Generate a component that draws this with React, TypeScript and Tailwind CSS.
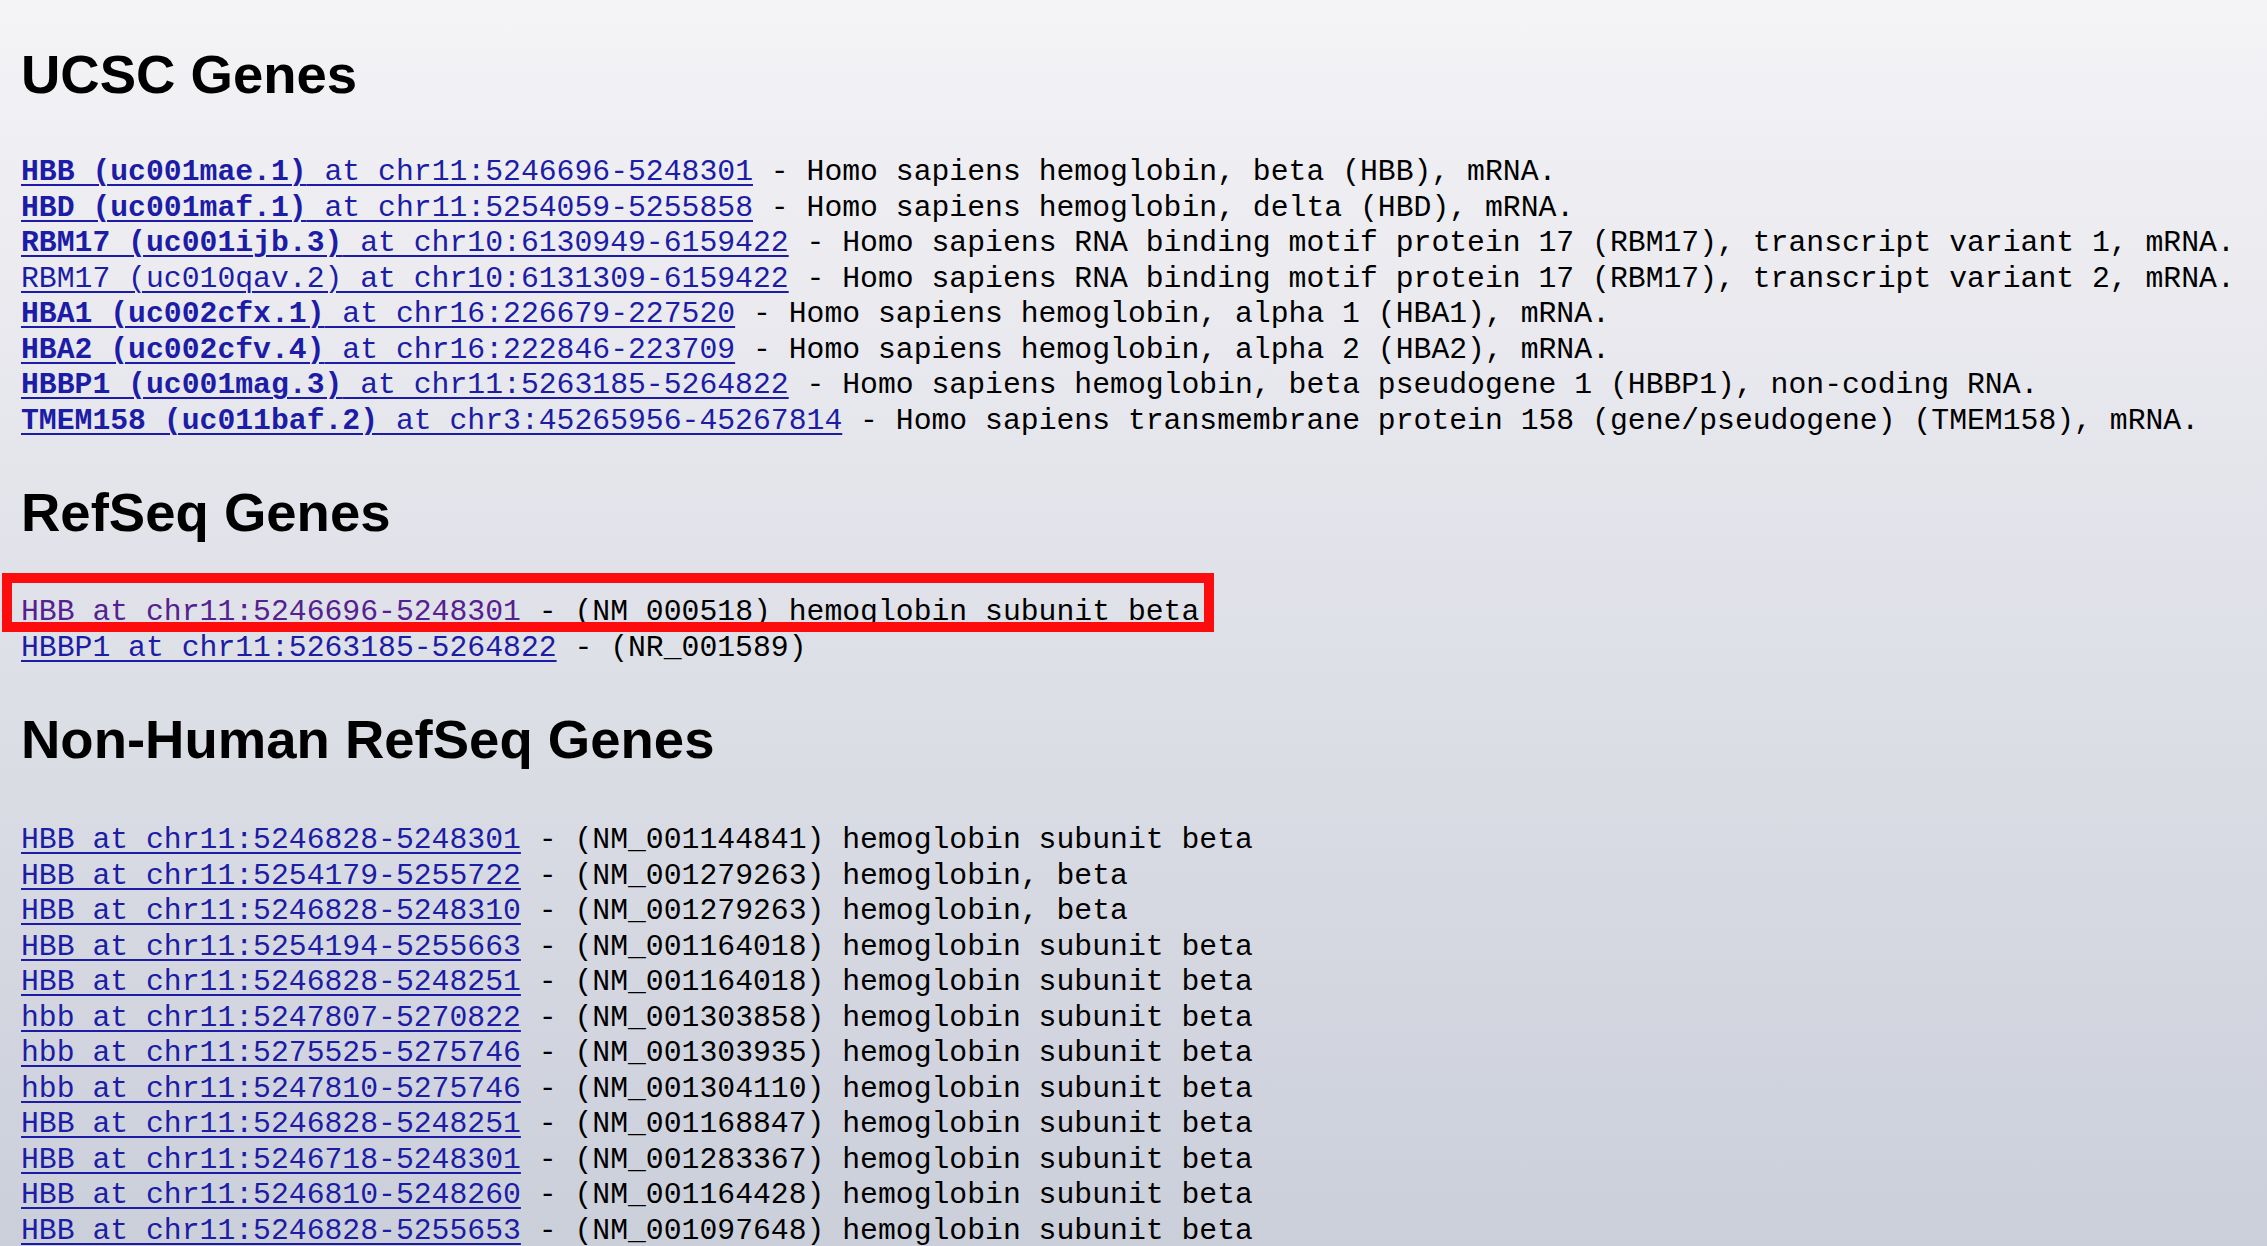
import React from 'react';

type UcscRow = { bold?: string; rest: string; desc: string };

const ucscRows: UcscRow[] = [
  { bold: 'HBB (uc001mae.1)', rest: ' at chr11:5246696-5248301', desc: ' - Homo sapiens hemoglobin, beta (HBB), mRNA.' },
  { bold: 'HBD (uc001maf.1)', rest: ' at chr11:5254059-5255858', desc: ' - Homo sapiens hemoglobin, delta (HBD), mRNA.' },
  { bold: 'RBM17 (uc001ijb.3)', rest: ' at chr10:6130949-6159422', desc: ' - Homo sapiens RNA binding motif protein 17 (RBM17), transcript variant 1, mRNA.' },
  { rest: 'RBM17 (uc010qav.2) at chr10:6131309-6159422', desc: ' - Homo sapiens RNA binding motif protein 17 (RBM17), transcript variant 2, mRNA.' },
  { bold: 'HBA1 (uc002cfx.1)', rest: ' at chr16:226679-227520', desc: ' - Homo sapiens hemoglobin, alpha 1 (HBA1), mRNA.' },
  { bold: 'HBA2 (uc002cfv.4)', rest: ' at chr16:222846-223709', desc: ' - Homo sapiens hemoglobin, alpha 2 (HBA2), mRNA.' },
  { bold: 'HBBP1 (uc001mag.3)', rest: ' at chr11:5263185-5264822', desc: ' - Homo sapiens hemoglobin, beta pseudogene 1 (HBBP1), non-coding RNA.' },
  { bold: 'TMEM158 (uc011baf.2)', rest: ' at chr3:45265956-45267814', desc: ' - Homo sapiens transmembrane protein 158 (gene/pseudogene) (TMEM158), mRNA.' },
];

const nonHuman: [string, string][] = [
  ['HBB at chr11:5246828-5248301', ' - (NM_001144841) hemoglobin subunit beta'],
  ['HBB at chr11:5254179-5255722', ' - (NM_001279263) hemoglobin, beta'],
  ['HBB at chr11:5246828-5248310', ' - (NM_001279263) hemoglobin, beta'],
  ['HBB at chr11:5254194-5255663', ' - (NM_001164018) hemoglobin subunit beta'],
  ['HBB at chr11:5246828-5248251', ' - (NM_001164018) hemoglobin subunit beta'],
  ['hbb at chr11:5247807-5270822', ' - (NM_001303858) hemoglobin subunit beta'],
  ['hbb at chr11:5275525-5275746', ' - (NM_001303935) hemoglobin subunit beta'],
  ['hbb at chr11:5247810-5275746', ' - (NM_001304110) hemoglobin subunit beta'],
  ['HBB at chr11:5246828-5248251', ' - (NM_001168847) hemoglobin subunit beta'],
  ['HBB at chr11:5246718-5248301', ' - (NM_001283367) hemoglobin subunit beta'],
  ['HBB at chr11:5246810-5248260', ' - (NM_001164428) hemoglobin subunit beta'],
  ['HBB at chr11:5246828-5255653', ' - (NM_001097648) hemoglobin subunit beta'],
];

const linkCls = 'text-[#1c1ca6] underline decoration-2 underline-offset-4';

function Heading({ children, className = '' }: { children: React.ReactNode; className?: string }) {
  return (
    <h2 className={`font-['Liberation_Sans','Arial',sans-serif] font-bold text-[54.5px] leading-[60px] text-black ${className}`}>
      {children}
    </h2>
  );
}

export default function App() {
  return (
    <div className="h-[1246px] overflow-hidden bg-linear-to-b from-[#f4f3f6] to-[#cbcfda] pl-[21px] pt-[45px]">
      <div className="font-['Liberation_Mono','Courier_New',monospace] text-[29.75px] leading-[35.5px] text-black">
        <Heading>UCSC Genes</Heading>

        <div className="mt-[50px]">
          {ucscRows.map((r, i) => (
            <div key={i} className="whitespace-pre">
              <a className={linkCls}>
                {r.bold && <b className="font-bold">{r.bold}</b>}
                {r.rest}
              </a>
              {r.desc}
            </div>
          ))}
        </div>

        <Heading className="mt-[44px]">RefSeq Genes</Heading>

        <div className="mt-[52px]">
          <div className="relative whitespace-pre">
            <a className="text-[#55208f] underline decoration-2 underline-offset-4">HBB at chr11:5246696-5248301</a>
            {' - (NM_000518) hemoglobin subunit beta'}
            {/* highlight box */}
            <div className="absolute left-[-19px] top-[-22px] h-[59px] w-[1212px] border-[10px] border-[#fc0c0c]" />
          </div>
          <div className="whitespace-pre">
            <a className={linkCls}>HBBP1 at chr11:5263185-5264822</a>
            {' - (NR_001589)'}
          </div>
        </div>

        <Heading className="mt-[44px]">Non-Human RefSeq Genes</Heading>

        <div className="mt-[53px]">
          {nonHuman.map(([link, desc], i) => (
            <div key={i} className="whitespace-pre">
              <a className={linkCls}>{link}</a>
              {desc}
            </div>
          ))}
        </div>
      </div>
    </div>
  );
}
